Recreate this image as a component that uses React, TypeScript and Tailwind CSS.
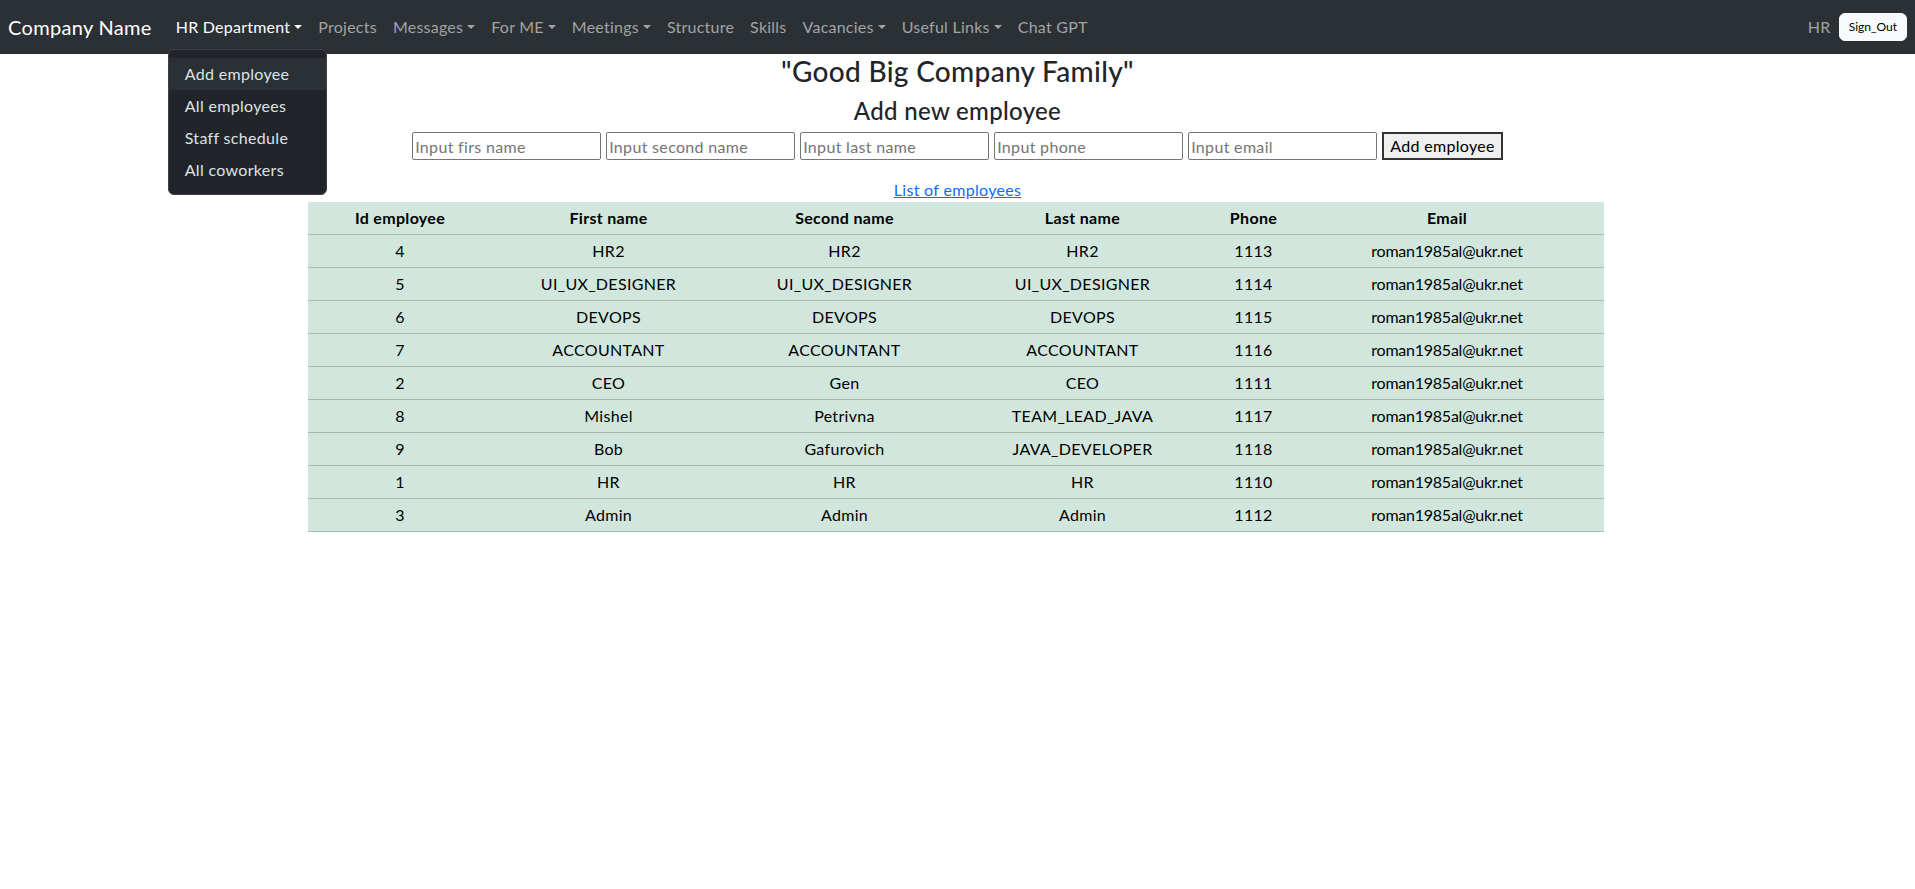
import React from "react";

type NavItem = { label: string; caret?: boolean; active?: boolean };

const navItems: NavItem[] = [
  { label: "HR Department", caret: true, active: true },
  { label: "Projects" },
  { label: "Messages", caret: true },
  { label: "For ME", caret: true },
  { label: "Meetings", caret: true },
  { label: "Structure" },
  { label: "Skills" },
  { label: "Vacancies", caret: true },
  { label: "Useful Links", caret: true },
  { label: "Chat GPT" },
];

const menuItems = ["Add employee", "All employees", "Staff schedule", "All coworkers"];

const inputs = [
  "Input firs name",
  "Input second name",
  "Input last name",
  "Input phone",
  "Input email",
];

const employees: [number, string, string, string, number][] = [
  [4, "HR2", "HR2", "HR2", 1113],
  [5, "UI_UX_DESIGNER", "UI_UX_DESIGNER", "UI_UX_DESIGNER", 1114],
  [6, "DEVOPS", "DEVOPS", "DEVOPS", 1115],
  [7, "ACCOUNTANT", "ACCOUNTANT", "ACCOUNTANT", 1116],
  [2, "CEO", "Gen", "CEO", 1111],
  [8, "Mishel", "Petrivna", "TEAM_LEAD_JAVA", 1117],
  [9, "Bob", "Gafurovich", "JAVA_DEVELOPER", 1118],
  [1, "HR", "HR", "HR", 1110],
  [3, "Admin", "Admin", "Admin", 1112],
];

function Caret() {
  return (
    <span className="ml-[4px] inline-block align-[0.255em] border-x-[4.8px] border-t-[4.8px] border-x-transparent border-t-current" />
  );
}

function Navbar() {
  return (
    <nav className="flex h-[54px] items-center bg-[#2b3035] px-2">
      <span className="mr-4 text-[20px] leading-[30px] text-white">Company Name</span>
      <ul className="flex items-center tracking-[0.015em]">
        {navItems.map((item) => (
          <li key={item.label} className="relative">
            <span
              className={`block px-2 py-2 text-[16px] leading-6 ${
                item.active ? "text-white" : "text-[#a1a3a6]"
              }`}
            >
              {item.label}
              {item.caret && <Caret />}
            </span>
            {item.active && (
              <div className="absolute left-0 top-full z-10 mt-[2px] w-[159px] rounded-[6px] border border-[#3d4145] bg-[#212529] py-2 tracking-[0.02em]">
                {menuItems.map((m, i) => (
                  <div
                    key={m}
                    className={`px-4 py-1 text-[16px] leading-6 text-[#dee2e6] ${
                      i === 0 ? "bg-[#2b3035]" : ""
                    }`}
                  >
                    {m}
                  </div>
                ))}
              </div>
            )}
          </li>
        ))}
      </ul>
      <div className="ml-auto flex items-center gap-2">
        <span className="text-[16px] leading-6 text-[#a1a3a6]">HR</span>
        <button className="h-[28px] rounded-[6px] border border-[#f8f9fa] bg-[#f8f9fa] px-[9px] text-[12px] leading-[18px] tracking-normal text-black">
          Sign_Out
        </button>
      </div>
    </nav>
  );
}

export default function App() {
  return (
    <div className="min-h-screen bg-white font-['Segoe_UI',Lato,sans-serif] tracking-[0.02em] text-[#212529]">
      <Navbar />
      <main className="flex flex-col items-center">
        <h3 className="mt-[1px] mb-2 text-[28px] font-medium leading-[1.2]">"Good Big Company Family"</h3>
        <h4 className="mb-[7px] text-[24px] font-medium leading-[1.2]">Add new employee</h4>
        <div className="flex items-center gap-[5px]">
          {inputs.map((p) => (
            <input
              key={p}
              placeholder={p}
              className="h-[28px] w-[189px] rounded-[2px] border border-[#767676] px-[2px] text-[16px] placeholder:text-[#757575]"
            />
          ))}
          <button className="h-[28px] border-2 border-[#333] bg-[#efefef] px-[6px] text-[16px] leading-5 text-black">
            Add employee
          </button>
        </div>
        <a href="#" className="mt-[18px] text-[16px] leading-6 text-[#0d6efd] underline">
          List of employees
        </a>
        <table className="w-[1296px] -translate-x-[2px] table-fixed border-collapse bg-[#d1e7dd] text-center text-[16px] leading-6 text-black">
          <colgroup>
            <col className="w-[185px]" />
            <col className="w-[232px]" />
            <col className="w-[240px]" />
            <col className="w-[236px]" />
            <col className="w-[106px]" />
            <col />
          </colgroup>
          <thead>
            <tr className="border-b border-[#a7b9b1]">
              {["Id employee", "First name", "Second name", "Last name", "Phone"].map((h) => (
                <th key={h} className="px-1 py-1 font-bold">
                  {h}
                </th>
              ))}
              <th className="py-1 pl-1 pr-[20px] font-bold">Email</th>
            </tr>
          </thead>
          <tbody>
            {employees.map((e) => (
              <tr key={e[0]} className="border-b border-[#a7b9b1]">
                <td className="px-1 py-1">{e[0]}</td>
                <td className="px-1 py-1">{e[1]}</td>
                <td className="px-1 py-1">{e[2]}</td>
                <td className="px-1 py-1">{e[3]}</td>
                <td className="px-1 py-1">{e[4]}</td>
                <td className="py-1 pl-1 pr-[20px] tracking-[-0.015em]">roman1985al@ukr.net</td>
              </tr>
            ))}
          </tbody>
        </table>
      </main>
    </div>
  );
}
